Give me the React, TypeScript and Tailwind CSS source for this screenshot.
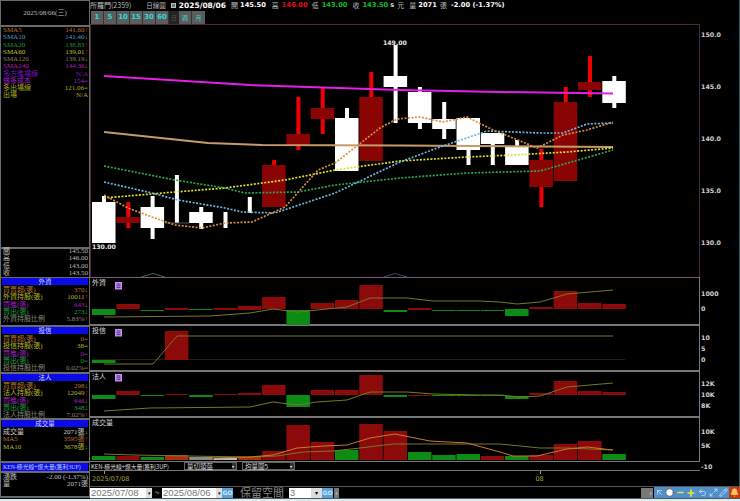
import React from "react";
import { ArrowUpLeft, Clock, Minus, Plus, Undo2, Maximize2, Pencil, Bell } from "lucide-react";

const cx = (i: number) => 104 + 24.3 * i;
type C = [number, number, number, number, "w" | "r"];
// wickTop, wickBot, bodyTop, bodyBot, colour
const candles: C[] = [
  [196, 243, 202, 243, "w"], [202, 228, 217, 223, "r"], [196, 239, 207, 228, "w"], [175, 223, 175, 175, "w"],
  [207, 229, 212, 223, "w"], [212, 228, 212, 212, "w"], [197, 213, 197, 197, "w"], [160, 207, 165, 207, "r"],
  [97, 150, 134, 145, "r"], [88, 134, 108, 119, "r"], [108, 171, 118, 171, "w"], [72, 161, 97, 161, "r"],
  [45, 123, 76, 87, "w"], [87, 129, 92, 123, "w"], [102, 139, 119, 129, "w"], [118, 165, 118, 150, "w"],
  [133, 165, 133, 144, "w"], [140, 165, 146, 165, "w"], [149, 207, 160, 187, "r"], [87, 181, 102, 181, "r"],
  [56, 97, 82, 90, "r"], [76, 108, 81, 103, "w"],
];

const pts = (a: number[][]) => a.map((p) => p.join(",")).join(" ");
const mainLines = [
  { c: "#e61ee6", w: 2, d: "", p: [[104, 76], [250, 85], [400, 90], [500, 92], [613, 93.5]] },
  { c: "#c89a68", w: 2, d: "", p: [[104, 132], [208, 143], [262, 145], [400, 145.5], [613, 147]] },
  { c: "#e0e030", w: 1.7, d: "2 1.5", p: [[104, 198], [175, 192], [225, 188], [285, 180], [335, 170], [400, 161], [467, 157], [513, 155], [567, 152], [613, 148]] },
  { c: "#2fa84a", w: 1.7, d: "2 1.5", p: [[104, 166], [175, 180], [225, 188], [245, 193], [298, 192], [335, 185], [400, 178], [467, 173], [540, 171], [613, 150]] },
  { c: "#6cb8e0", w: 1.7, d: "2 1.5", p: [[104, 182], [152, 193], [178, 200], [225, 208], [242, 212], [275, 213], [335, 193], [400, 162], [440, 147], [487, 131], [540, 133], [563, 133], [587, 124], [613, 123]] },
  { c: "#d89040", w: 1.7, d: "2 1.5", p: [[104, 195], [128, 208], [152, 217], [175, 225], [202, 228], [225, 223], [252, 222], [285, 207], [318, 170], [335, 163], [380, 128], [397, 119], [420, 117], [443, 122], [467, 117], [493, 130], [513, 138], [537, 148], [563, 135], [587, 130], [613, 122]] },
];

type Bar = [number, number, "g" | "r" | "s" | "w" | "o"];
const barFill = { g: "#0c8c14", r: "#8c0a0a", s: "#8a8a8a", w: "#b8b8b8", o: "#a83208" };
const bars1: Bar[] = [[309, 315, "g"], [304, 309, "r"], [310, 311, "g"], [308, 310, "r"], [309, 310, "g"], [308, 310, "r"], [306, 310, "r"], [297, 309, "r"], [310, 325, "g"], [303, 309, "r"], [300, 309, "r"], [285, 309, "r"], [310, 312, "g"], [308, 310, "r"], [310, 311, "g"], [310, 311, "g"], [310, 311, "g"], [309, 316, "g"], [307, 309, "r"], [291, 309, "r"], [303, 309, "r"], [304, 309, "r"]];
const bars2: Bar[] = [[360, 363, "g"], [331, 360, "r"]];
const bars3: Bar[] = [[395, 399, "g"], [391, 395, "r"], [395, 396, "g"], [394, 395, "r"], [395, 397, "g"], [394, 395, "r"], [393, 395, "r"], [385, 395, "r"], [395, 407, "g"], [390, 395, "r"], [390, 395, "r"], [375, 395, "r"], [395, 397, "g"], [395, 396, "r"], [395, 396, "g"], [395, 396, "g"], [395, 396, "g"], [396, 399, "g"], [393, 395, "r"], [381, 395, "r"], [391, 395, "r"], [392, 395, "r"]];
const bars4: Bar[] = [[456, 460, "g"], [456, 460, "r"], [457, 460, "g"], [455, 460, "o"], [457, 460, "s"], [458, 460, "w"], [457, 460, "o"], [451, 460, "r"], [425, 460, "r"], [442, 460, "r"], [450, 460, "g"], [424, 460, "r"], [431, 460, "r"], [452, 460, "g"], [455, 460, "g"], [454, 460, "g"], [456, 460, "r"], [456, 460, "g"], [455, 460, "r"], [444, 460, "r"], [441, 460, "r"], [454, 460, "g"]];

const Bars = ({ data, idx }: { data: Bar[]; idx?: number[] }) => (
  <g>
    {data.map((b, n) => {
      const i = idx ? idx[n] : n;
      return <rect key={n} x={cx(i) - 12} y={b[0]} width={23.5} height={b[1] - b[0]} fill={barFill[b[2]]} />;
    })}
  </g>
);
const Line = ({ p, c = "#77772a" }: { p: number[][]; c?: string }) => (
  <polyline points={pts(p)} fill="none" stroke={c} strokeWidth={1} />
);
const Axis = ({ y, t }: { y: number; t: string }) => (
  <text x={701} y={y + 2.4} fontSize={6.3} fontWeight={700} fill="#d0d0d0" fontFamily="'DejaVu Sans', sans-serif">{t}</text>
);
const Cap = ({ y, t }: { y: number; t: string }) => (
  <text x={92} y={y} fontSize={7} fill="#d8d8d8" fontFamily="'Noto Sans CJK TC', sans-serif">{t}</text>
);
const MenuIcon = ({ y }: { y: number }) => (
  <g>
    <rect x={115} y={y} width={7} height={7.5} fill="#c88cf8" />
    <path d={`M116.5 ${y + 2}h4M116.5 ${y + 3.8}h4M116.5 ${y + 5.6}h4`} stroke="#3a1a60" strokeWidth={0.8} />
  </g>
);
const Pane = ({ y0, h, children, line = "#7a7a7a" }: { y0: number; h: number; children: React.ReactNode; line?: string }) => (
  <svg width={650} height={h} viewBox={`90 ${y0} 650 ${h}`} className="block shrink-0">
    {children}
    <line x1={699.5} x2={699.5} y1={y0} y2={y0 + h} stroke={line} />
  </svg>
);

const rowSans = "font-['Liberation_Serif','Noto_Sans_CJK_TC',serif]";
type R = [string, string, string, string?];
const Up = () => <span className="text-[#e01010]">↑</span>;
const Down = () => <span className="text-[#20c040]">↓</span>;
const Row = ({ r }: { r: R }) => (
  <div className="flex h-[7.25px] items-center justify-between pl-[2px] pr-[1px] text-[7px] leading-[7px]" style={{ color: r[2] }}>
    <span className="whitespace-nowrap">{r[0]}</span>
    <span className="whitespace-nowrap">
      {r[1]}
      {r[3] === "u" ? <Up /> : r[3] === "d" ? <Down /> : r[3] === "e" ? <span>=</span> : null}
    </span>
  </div>
);
const Block = ({ title, rows, cls }: { title: string; rows: R[]; cls: string }) => (
  <section className={`border-t-2 border-[#6a6a6a] ${cls}`}>
    <div className="mx-[1px] h-[7px] bg-[#0a0ae8] text-center text-[6.5px] leading-[7px] text-[#d8d8ff]">{title}</div>
    <div className="pt-[2px]">{rows.map((r, i) => <Row key={i} r={r} />)}</div>
  </section>
);

const ma: R[] = [
  ["SMA5", "141.60", "#b87830", "u"], ["SMA10", "141.40", "#4f9fd0", "d"], ["SMA20", "138.83", "#1a9a38", "u"],
  ["SMA60", "139.01", "#c4c438", "u"], ["SMA120", "139.19", "#9a7a5a", "d"], ["SMA240", "144.36", "#b020b0", "d"],
  ["多方進場線", "N/A", "#7a10c0"], ["做多成本", "154", "#9a20d0", "e"], ["多出場線", "121.06", "#a8a820", "e"], ["出場", "N/A", "#a8a820"],
];
const sec = (n: string, a: string, b: string, c: string, d: string, e: string, ua: string, ub: string, uc: string, ud: string, ue: string): R[] => [
  ["買賣超(張)", a, "#b87830", ua], [`${n}持股(張)`, b, "#b8b830", ub], ["買進(張)", c, "#a020c0", uc],
  ["賣出(張)", d, "#20a040", ud], [`${n}持股比例`, e, "#8a8a7a", ue],
];

const Sel = ({ t, cls }: { t: string; cls: string }) => (
  <div className={`flex h-[8px] items-center justify-between border border-[#666] pl-[2px] text-[6.5px] leading-[7px] text-[#ddd] ${cls}`}>
    <span>{t}</span>
    <span className="h-full w-[4px] bg-[#333] text-[4px] text-white">▾</span>
  </div>
);
const DateBox = ({ t, cls }: { t: string; cls: string }) => (
  <div className={`flex h-[10px] items-center justify-between bg-white pl-[1px] text-[9.5px] leading-[10px] text-[#777] font-['Liberation_Sans',sans-serif] ${cls}`}>
    <span>{t}</span>
    <span className="flex h-full w-[6px] items-center justify-center bg-[#ddd] text-[5px] text-black">▾</span>
  </div>
);
const Go = () => (
  <div className="flex h-[10px] w-[11px] items-center justify-center bg-[#5aa0d8] text-[6px] font-bold leading-[6px] text-[#cfe8ff] font-['DejaVu_Sans',sans-serif]">GO</div>
);
const Tool = ({ children, bg = "bg-[#4f90c8]" }: { children: React.ReactNode; bg?: string }) => (
  <div className={`flex h-[11px] w-[10.8px] items-center justify-center ${bg}`}>{children}</div>
);

export default function App() {
  return (
    <div className="relative flex h-[501px] w-[740px] flex-col overflow-hidden bg-black font-['Noto_Sans_CJK_TC',sans-serif]">
      <div className="flex h-[499px] w-full border-r border-[#2a5a5a]">
        {/* left column */}
        <aside className={`flex h-[498px] w-[90px] shrink-0 flex-col border-x border-[#6a6a6a] ${rowSans}`}>
          <div className="flex h-[25px] shrink-0 items-center justify-center border-t border-[#6a6a6a] text-[7px] text-[#bbb]">2025/08/06(三)</div>
          <div className="h-[222px] shrink-0 border-t-2 border-[#6a6a6a]">
            {ma.map((r, i) => <Row key={i} r={r} />)}
          </div>
          <div className="h-[30px] shrink-0 border-t-2 border-[#6a6a6a]">
            <div className="-mt-[1px]">
              {[["開", "145.50"], ["高", "146.00"], ["低", "143.00"], ["收", "143.50"]].map(([a, b]) => (
                <Row key={a} r={[a, b, "#bcbcbc"]} />
              ))}
            </div>
          </div>
          <Block cls="h-[48px] shrink-0 !border-t" title="外資" rows={sec("外資", "370", "10011", "643", "273", "5.83%", "d", "u", "d", "d", "u")} />
          <Block cls="h-[47px] shrink-0" title="投信" rows={sec("投信", "0", "38", "0", "0", "0.02%", "e", "e", "e", "e", "e")} />
          <Block cls="h-[46px] shrink-0" title="法人" rows={sec("法人", "298", "12049", "646", "348", "7.02%", "d", "u", "d", "d", "u")} />
          <Block
            cls="h-[43px] shrink-0"
            title="成交量"
            rows={[["成交量", "2071張", "#d0d0d0", "d"], ["MA5", "3595張", "#b87830", "u"], ["MA10", "3678張", "#b8b830", "d"]]}
          />
          <div className="h-[10px] shrink-0 border-t-2 border-[#6a6a6a]">
            <div className="mx-[1px] h-[8px] overflow-hidden whitespace-nowrap bg-[#0a0ae8] pl-[1px] text-[5.8px] leading-[8px] text-[#bcd0ff]">KEN-極光線+爆大量(獲利3UP)</div>
          </div>
          <div className="flex-1 border-y-2 border-[#6a6a6a] pt-[1px]">
            <Row r={["漲跌", "-2.00 (-1.37%)", "#c0c0c0"]} />
            <Row r={["量", "2071張", "#c0c0c0"]} />
          </div>
        </aside>

        {/* right column */}
        <main className="flex w-[650px] shrink-0 flex-col">
          <header className="h-[24px] shrink-0">
            <div className="flex h-[11px] items-center whitespace-nowrap text-[7px] leading-[11px] text-[#bbb]">
              <span>所羅門(2359)</span>
              <span className="ml-[15px] text-[6.5px]">日線圖</span>
              <span className="ml-[5px] h-[5px] w-[5px] border border-[#bbb] bg-[#777]" />
              <b className="ml-[3px] font-['DejaVu_Sans',sans-serif] text-[7.5px] text-white">2025/08/06</b>
              <span className="ml-[5px]">開</span>
              <b className="ml-[2px] font-['DejaVu_Sans',sans-serif] text-[6.7px] text-white">145.50</b>
              <span className="ml-[6px]">高</span>
              <b className="ml-[3px] font-['DejaVu_Sans',sans-serif] text-[6.7px] text-[#e81010]">146.00</b>
              <span className="ml-[4px]">低</span>
              <b className="ml-[3px] font-['DejaVu_Sans',sans-serif] text-[6.7px] text-[#10c020]">143.00</b>
              <span className="ml-[5px]">收</span>
              <b className="ml-[3px] font-['DejaVu_Sans',sans-serif] text-[6.7px] text-[#10c020]">143.50</b>
              <b className="ml-[2px] font-['DejaVu_Sans',sans-serif] text-[6.7px] text-[#ddd]">s</b>
              <span className="ml-[3px]">元</span>
              <span className="ml-[5px]">量</span>
              <b className="ml-[2px] font-['DejaVu_Sans',sans-serif] text-[6.7px] text-white">2071</b>
              <span className="ml-[3px]">張</span>
              <b className="ml-[4px] font-['DejaVu_Sans',sans-serif] text-[6.7px] text-white">-2.00 (-1.37%)</b>
            </div>
            <div className="ml-[1px] flex h-[13px] w-[114px] font-['DejaVu_Sans',sans-serif] text-[7px] font-bold text-[#30d8d8]">
              {["1", "5", "10", "15", "30", "60"].map((t) => (
                <div key={t} className="flex w-[13px] items-center justify-center border-r border-[#333] bg-[#5c5c5c]">{t}</div>
              ))}
              <div className="flex w-[10px] items-center justify-center bg-[#222] text-[6px] font-normal text-[#555] font-['Noto_Sans_CJK_TC',sans-serif]">日</div>
              <div className="flex w-[13px] items-center justify-center border-r border-[#333] bg-[#5c5c5c] text-[6px] font-normal font-['Noto_Sans_CJK_TC',sans-serif]">週</div>
              <div className="flex w-[13px] items-center justify-center bg-[#5c5c5c] text-[6px] font-normal font-['Noto_Sans_CJK_TC',sans-serif]">月</div>
            </div>
          </header>

          <Pane y0={24} h={253} line="#4a2a3c">
            <line x1={90} x2={700} y1={24.5} y2={24.5} stroke="#4a2a3c" />
            <line x1={90.5} x2={90.5} y1={24} y2={277} stroke="#4a2a3c" />
            {candles.map((k, i) => (
              <g key={i}>
                <rect x={cx(i) - 2} y={k[0]} width={4} height={k[1] - k[0]} fill={k[4] === "w" ? "#fff" : "#f00000"} />
                <rect x={cx(i) - 12} y={k[2]} width={23.5} height={k[3] - k[2]} fill={k[4] === "w" ? "#fff" : "#8a0404"} />
              </g>
            ))}
            <rect x={165} y={222.5} width={24} height={1} fill="#555" />
            {mainLines.map((l, i) => (
              <polyline key={i} points={pts(l.p)} fill="none" stroke={l.c} strokeWidth={l.w} strokeDasharray={l.d || undefined} />
            ))}
            <polyline points="141,277 153,273.5 165,277" fill="none" stroke="#3c6a4a" />
            <polyline points="384,277 395,273.5 407,277" fill="none" stroke="#3c4a6a" />
            <text x={92} y={248.5} fontSize={6.2} fontWeight={700} fill="#e8e8e8" fontFamily="'DejaVu Sans', sans-serif">130.00</text>
            <text x={383} y={44.5} fontSize={6.2} fontWeight={700} fill="#e8e8e8" fontFamily="'DejaVu Sans', sans-serif">149.00</text>
            <Axis y={35} t="150.0" />
            <Axis y={87} t="145.0" />
            <Axis y={139} t="140.0" />
            <Axis y={191} t="135.0" />
            <Axis y={243} t="130.0" />
          </Pane>

          <Pane y0={277} h={49}>
            <line x1={90} x2={700} y1={277.5} y2={277.5} stroke="#7a5a78" />
            <line x1={90} x2={700} y1={325} y2={325} stroke="#777" strokeWidth={2} />
            <Bars data={bars1} />
            <Line p={[[104, 317], [210, 316], [250, 313], [273, 309], [297, 312], [317, 310], [347, 307], [370, 298], [407, 298], [433, 301], [480, 301], [500, 302], [517, 304], [540, 302], [567, 294], [613, 290]]} />
            <Cap y={285} t="外資" />
            <MenuIcon y={282} />
            <Axis y={294} t="1000" />
            <Axis y={309} t="0" />
          </Pane>

          <Pane y0={326} h={46}>
            <line x1={90} x2={700} y1={371} y2={371} stroke="#777" strokeWidth={2} />
            <line x1={92} x2={625} y1={359.5} y2={359.5} stroke="#2a1a1a" />
            <Bars data={bars2} idx={[0, 3]} />
            <Line p={[[104, 364], [153, 364], [177, 336], [613, 336]]} />
            <Cap y={333} t="投信" />
            <MenuIcon y={329} />
            <Axis y={338} t="10" />
            <Axis y={349} t="5" />
            <Axis y={360} t="0" />
          </Pane>

          <Pane y0={372} h={46}>
            <line x1={90} x2={700} y1={417} y2={417} stroke="#777" strokeWidth={2} />
            <Bars data={bars3} />
            <Line p={[[104, 411], [150, 408], [250, 407], [273, 402], [297, 405], [317, 402], [347, 400], [370, 392], [407, 392], [433, 394], [480, 395], [500, 395], [520, 397], [540, 396], [567, 387], [613, 383]]} />
            <Cap y={379} t="法人" />
            <MenuIcon y={374} />
            <Axis y={384} t="12K" />
            <Axis y={395} t="10K" />
            <Axis y={406} t="8K" />
          </Pane>

          <Pane y0={418} h={43}>
            <Bars data={bars4} />
            <Line p={[[104, 454], [133, 455], [187, 456], [250, 457], [277, 456], [303, 452], [333, 451], [360, 448], [393, 444], [457, 444], [500, 444], [540, 448], [567, 448], [613, 450]]} />
            <Line c="#c87a30" p={[[210, 458], [250, 457], [273, 455], [297, 448], [323, 446], [347, 445], [370, 438], [395, 434], [430, 441], [467, 443], [500, 452], [513, 456], [537, 456], [567, 449], [587, 447], [613, 450]]} />
            <Cap y={425} t="成交量" />
            <Axis y={432} t="10K" />
            <Axis y={446} t="5K" />
          </Pane>

          <div className="flex h-[10px] w-[610px] shrink-0 items-center border-y border-[#777] pl-[1px]">
            <span className="w-[93px] whitespace-nowrap text-[5.8px] leading-[7px] text-[#ddd]">KEN-極光線+爆大量(獲利3UP)</span>
            <Sel t="量切頭盔" cls="w-[53px]" />
            <Sel t="均量圖5" cls="ml-[5px] w-[53px]" />
          </div>
          <div className="relative flex h-[15px] w-[650px] shrink-0 items-center pl-[2px] font-['DejaVu_Sans',sans-serif] text-[6.5px] leading-[8px] text-[#a0a038]">
            <span className="absolute left-[14px] top-0 h-[3px] w-px bg-[#a0a038]" />
            <span className="absolute left-[450px] top-0 h-[3px] w-px bg-[#a0a038]" />
            <span className="pt-[1px]">2025/07/08</span>
            <span className="ml-[406px] pt-[1px]">08</span>
            <span className="absolute left-[611px] top-[-8px] text-[6.3px] font-bold text-[#d0d0d0]">-10</span>
          </div>
          <div className="box-content flex h-[11px] shrink-0 items-center border-y border-[#555]">
            <DateBox t="2025/07/08" cls="w-[62px]" />
            <span className="w-[10px] text-center text-[9px] leading-[10px] text-[#ccc]">~</span>
            <DateBox t="2025/08/06" cls="w-[60px]" />
            <Go />
            <span className="ml-[7px] w-[49px] whitespace-nowrap text-[11px] leading-[11px] text-[#8a8a8a]">保留空間</span>
            <div className="flex h-[10px] w-[33px] items-center justify-between bg-white pl-[1px] text-[9px] leading-[10px] text-[#777] font-['Liberation_Sans',sans-serif]">
              <span>3</span>
              <span className="flex h-full w-[11px] items-center justify-center bg-[#ddd] text-[6px] text-black">▾</span>
            </div>
            <Go />
            <span className="ml-[1px] flex h-[10px] w-[5px] items-center justify-center bg-[#777] text-[7px] leading-[7px] text-white">‹</span>
            <div className="flex-1" />
            <span className="flex h-[10px] w-[12px] items-center justify-end bg-[#777] pr-[1px] text-[7px] leading-[7px] text-white">›</span>
            <div className="ml-[1px] flex">
              <Tool><ArrowUpLeft size={9} color="#cfe8ff" strokeWidth={2} /></Tool>
              <Tool><Clock size={9} color="#555" fill="#fff" strokeWidth={2} /></Tool>
              <Tool><Minus size={9} color="#f0e040" strokeWidth={4} /></Tool>
              <Tool><Plus size={10} color="#f0e040" strokeWidth={4} /></Tool>
              <Tool><Undo2 size={9} color="#cfe8ff" strokeWidth={2} /></Tool>
              <Tool><Maximize2 size={9} color="#cfe8ff" strokeWidth={2} /></Tool>
              <Tool><Pencil size={9} color="#cfe8ff" strokeWidth={2} /></Tool>
              <Tool bg="bg-[#c83a10]"><Bell size={9} color="#ffc860" fill="#ffc860" strokeWidth={2} /></Tool>
            </div>
          </div>
        </main>
      </div>
      <div className="h-[2px] w-full shrink-0 bg-[#d8eef0]" />
    </div>
  );
}
